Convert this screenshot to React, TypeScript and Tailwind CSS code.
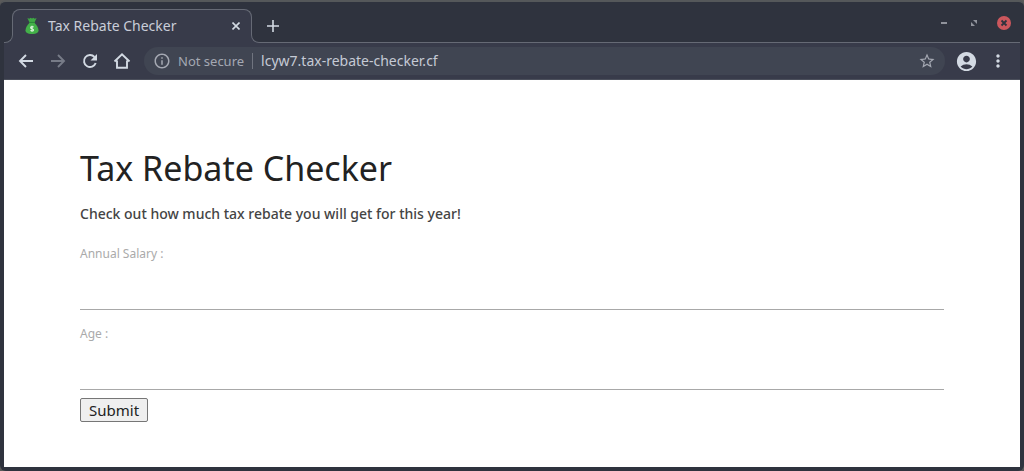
import React, { useState } from 'react';
import { MdAccountCircle, MdMoreVert, MdOutlineInfo, MdStarBorder } from 'react-icons/md';

const MoneyBag = () => (
  <svg viewBox="0 0 16 18" className="h-[18px] w-4 shrink-0" aria-hidden="true">
    <path d="M3.400 1l1.900.7L6.500.8 8 1.600l1.500-.8 1.200.9 1.900-.7-2.100 4.500h-5z" fill="#3fa745" />
    <path d="M5.400 6h5.200c1.800 1.700 3.900 4.600 3.900 7.200 0 2.700-2.300 3.700-6.500 3.700s-6.500-1-6.500-3.700C1.500 10.600 3.600 7.700 5.400 6z" fill="#43b049" />
    <path d="M5.200 5.400h5.600" stroke="#2c8a38" strokeWidth="1" />
    <path d="M9.500 10.300C9 9.300 6.600 9.400 6.600 10.700s2.900.8 2.900 2.200-2.400 1.400-3 .4M8 8.700v6" fill="none" stroke="#dff3df" strokeWidth="1.100" />
  </svg>
);

const TitleBar = () => (
  <div className="flex h-[41px] items-end">
    <div className="z-10 -mr-px bg-[#383b4a]">
      <div className="h-2 w-[9px] rounded-br-lg border-r border-b border-[#666a75] bg-[#2f333e]" />
    </div>
    <div className="relative flex h-[34px] w-60 items-center rounded-t-lg bg-[#383b4a] pr-2 pl-3 before:absolute before:inset-x-0 before:top-0 before:h-[26px] before:rounded-t-lg before:border-x before:border-t before:border-[#666a75]">
      <MoneyBag />
      <span className="ml-2 flex-1 text-sm leading-5 text-[#c9cdd8]">Tax Rebate Checker</span>
      <button type="button" aria-label="Close tab" className="relative flex h-4 w-4 items-center justify-center">
        <svg viewBox="0 0 8 8" className="h-2 w-2" stroke="#d3dae3" strokeWidth="1.600">
          <path d="M.5.5l7 7M7.500.5l-7 7" />
        </svg>
      </button>
    </div>
    <div className="z-10 -ml-px bg-[#383b4a]">
      <div className="h-2 w-[9px] rounded-bl-lg border-b border-l border-[#666a75] bg-[#2f333e]" />
    </div>
    <div className="flex h-full flex-1 items-center border-b border-[#666a75] pt-2 pr-2 pl-px">
      <button type="button" aria-label="New tab" className="flex h-6 w-6 items-center justify-center">
        <svg viewBox="0 0 12 12" className="h-3 w-3" stroke="#d3dae3" strokeWidth="1.600">
          <path d="M6 0v12M0 6h12" />
        </svg>
      </button>
      <div className="mb-1.5 ml-auto flex items-center gap-3.5">
        <button type="button" aria-label="Minimize" className="flex h-4 w-4 items-center justify-center">
          <svg viewBox="0 0 6 6" className="h-1.5 w-1.5" fill="#90939b">
            <path d="M0 2h6v2H0z" />
          </svg>
        </button>
        <button type="button" aria-label="Maximize" className="flex h-4 w-4 items-center justify-center">
          <svg viewBox="0 0 6 6" className="h-1.5 w-1.5" fill="#90939b">
            <path d="M2 0h4v4zM0 2l4 4H0z" />
          </svg>
        </button>
        <button type="button" aria-label="Close" className="flex h-4 w-4 items-center justify-center">
          <svg viewBox="0 0 14 14" className="h-3.5 w-3.5">
            <circle cx="7" cy="7" r="7" fill="#cc575d" />
            <path d="M4.500 4.500l5 5M9.500 4.500l-5 5" stroke="#2f333e" strokeWidth="1.800" />
          </svg>
        </button>
      </div>
    </div>
  </div>
);

interface NavButtonProps {
  label: string;
  path: string;
  fillPath?: string;
  className?: string;
}

const NavButton: React.FC<NavButtonProps> = ({ label, path, fillPath, className = '' }) => (
  <button type="button" aria-label={label} className={className}>
    <svg viewBox="0 0 20 20" className="h-5 w-5" fill="none" stroke="currentColor" strokeWidth="1.900">
      <path d={path} />
      {fillPath && <path d={fillPath} fill="currentColor" stroke="none" />}
    </svg>
  </button>
);

const Toolbar = () => (
  <div className="flex h-[37px] items-center border-b border-[#4b4f5b] bg-[#383b4a] px-3 text-[#d3dae3]">
    <div className="flex items-center gap-3">
      <NavButton label="Back" path="M17 10H4.500M10 4l-6 6 6 6" />
      <NavButton label="Forward" path="M3 10h12.500M10 4l6 6-6 6" className="text-[#777b87]" />
      <NavButton label="Reload" path="M15.700 12A6 6 0 1 1 14.500 6" fillPath="M17 3v6.500h-6.500z" />
      <NavButton label="Home" path="M2.500 10.500L10 3.300l7.500 7.200M5 9.500v7.300h10V9.500" />
    </div>
    <div className="ml-3 flex h-7 flex-1 items-center rounded-full bg-[#404552] px-[9px]">
      <MdOutlineInfo className="h-[18px] w-[18px] text-[#a4a8b2]" />
      <span className="ml-[7px] text-[13px] leading-5 text-[#a4a8b2]">Not secure</span>
      <span className="mx-2 h-4 w-px bg-[#70747f]" />
      <input
        type="text"
        aria-label="Address"
        defaultValue="lcyw7.tax-rebate-checker.cf"
        className="min-w-0 flex-1 bg-transparent text-sm leading-5 text-[#c5cad5] outline-none"
      />
      <button type="button" aria-label="Bookmark"><MdStarBorder className="h-[18px] w-[18px] text-[#a4a8b2]" /></button>
    </div>
    <button type="button" aria-label="Profile" className="ml-2.5"><MdAccountCircle className="h-[23px] w-[23px]" /></button>
    <button type="button" aria-label="Menu" className="ml-2.5"><MdMoreVert className="h-5 w-5" /></button>
  </div>
);

interface FieldProps {
  id: string;
  label: string;
  value: string;
  onChange: (value: string) => void;
}

const Field: React.FC<FieldProps> = ({ id, label, value, onChange }) => (
  <div className="mb-2 pt-1">
    <label htmlFor={id} className="block text-xs leading-6 text-[#aaaaaa]">{label}</label>
    <input
      id={id}
      type="text"
      value={value}
      onChange={(e) => onChange(e.target.value)}
      className="block h-11 w-full border-b border-[#a8a8a8] text-base text-[#333333] outline-none"
    />
  </div>
);

const App = () => {
  const [salary, setSalary] = useState('');
  const [age, setAge] = useState('');

  return (
    <div className="min-h-screen bg-[#5a5a5a] font-['Noto_Sans',sans-serif]">
      <div className="flex min-h-screen flex-col rounded-md border-t-2 border-[#55585a] bg-[#2f333e] px-1 pb-1">
        <TitleBar />
        <Toolbar />
        <main className="flex-1 bg-white px-[76px] pt-16">
          <h1 className="text-[34px] leading-12 text-[#222222]">Tax Rebate Checker</h1>
          <p className="mt-2.5 text-sm leading-6 font-medium text-[#444444]">Check out how much tax rebate you will get for this year!</p>
          <form className="mt-3" onSubmit={(e) => e.preventDefault()}>
            <Field id="salary" label="Annual Salary :" value={salary} onChange={setSalary} />
            <Field id="age" label="Age :" value={age} onChange={setAge} />
            <button type="submit" className="block h-6 rounded-xs border border-[#767676] bg-[#efefef] px-2 text-[15px] leading-5 text-[#222222]">
              Submit
            </button>
          </form>
        </main>
      </div>
    </div>
  );
};

export default App;
